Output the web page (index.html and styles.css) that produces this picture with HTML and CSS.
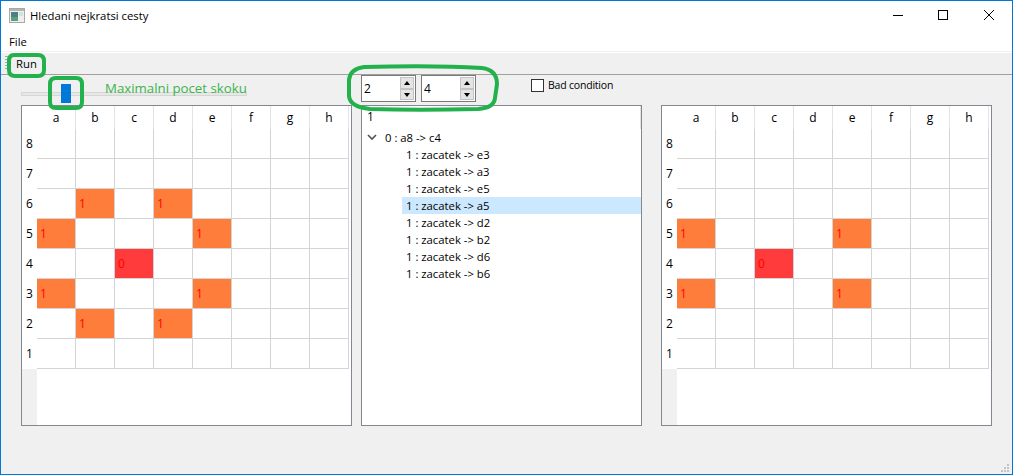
FILE: index.html
```html
<!DOCTYPE html>
<html lang="cs">
<head>
<meta charset="utf-8">
<title>Hledani nejkratsi cesty</title>
<link rel="stylesheet" href="styles.css">
</head>
<body>
<div class="window">
  <header class="titlebar">
    <svg class="app-icon" width="16" height="16" viewBox="0 0 16 16"><rect x="0.5" y="0.5" width="15" height="14" fill="#eef0ee" stroke="#a8a8a8"/><rect x="1" y="1" width="14" height="2" fill="#b4b4b4"/><rect x="2" y="4" width="7" height="9" fill="#4d7f86"/><rect x="2" y="9" width="7" height="4" fill="#5a9f80"/><rect x="10" y="4" width="4" height="4" fill="#cfe3d8"/></svg>
    <span class="title">Hledani nejkratsi cesty</span>
    <div class="caption-buttons">
      <svg width="46" height="30" viewBox="0 0 46 30"><path d="M19 14.5h10" stroke="#000" fill="none"/></svg>
      <svg width="46" height="30" viewBox="0 0 46 30"><rect x="18.5" y="9.5" width="9" height="9" stroke="#000" fill="none"/></svg>
      <svg width="46" height="30" viewBox="0 0 46 30"><path d="M18 9l10 10M28 9l-10 10" stroke="#000" fill="none"/></svg>
    </div>
  </header>
  <nav class="menubar"><span>File</span></nav>
  <div class="toolbar">
    <span class="grip"></span>
    <span class="tool">Run</span>
  </div>
  <div class="controls">
    <div class="slider"><span class="groove"></span><span class="handle"></span></div>
    <span class="slider-label">Maximalni pocet skoku</span>
    <div class="spin"><span class="spin-value">2</span><span class="spin-btns"><i class="up"></i><i class="down"></i></span></div>
    <div class="spin"><span class="spin-value">4</span><span class="spin-btns"><i class="up"></i><i class="down"></i></span></div>
    <label class="check"><span class="box"></span>Bad condition</label>
  </div>
  <main class="panels">
    <section class="board" id="left"></section>
    <section class="tree">
      <div class="tree-head">1</div>
      <div class="row top"><svg width="10" height="7" viewBox="0 0 10 7"><path d="M1 1l4 4 4-4" stroke="#555" stroke-width="1.7" fill="none"/></svg>0 : a8 -&gt; c4</div>
      <div class="row">1 : zacatek -&gt; e3</div>
      <div class="row">1 : zacatek -&gt; a3</div>
      <div class="row">1 : zacatek -&gt; e5</div>
      <div class="row selected">1 : zacatek -&gt; a5</div>
      <div class="row">1 : zacatek -&gt; d2</div>
      <div class="row">1 : zacatek -&gt; b2</div>
      <div class="row">1 : zacatek -&gt; d6</div>
      <div class="row">1 : zacatek -&gt; b6</div>
    </section>
    <section class="board" id="right"></section>
  </main>
  <svg class="resize" width="8" height="8" viewBox="0 0 8 8"><path d="M6 0h2v2H6zM3 3h2v2H3zM6 3h2v2H6zM0 6h2v2H0zM3 6h2v2H3zM6 6h2v2H6z" fill="#c4c4c4"/></svg>
  <svg class="marks" width="1013" height="475" viewBox="0 0 1013 475" aria-hidden="true">
    <g fill="none" stroke="#22b14c" stroke-width="4">
      <path d="M14 55H38Q44 55 44 61V70Q44 76 38 76H15Q9 76 9 70V61Q9 55 14 55Z"/>
      <path d="M56 78H76Q82 78 82 84V102Q82 108 76 108H56Q50 108 50 102V84Q50 78 56 78Z"/>
      <path d="M364 67C400 66 450 66 482 68Q497 70 497 84L495 98Q494 108 478 109C440 110 400 110 370 109Q350 107 349 96V80Q350 69 364 67Z"/>
    </g>
  </svg>
</div>
<script src="board.js"></script>
</body>
</html>
```
FILE: board.js
```js
var cols = ["a","b","c","d","e","f","g","h"];
var boards = {
  left: {a5:1,a3:1,b6:1,b2:1,d6:1,d2:1,e5:1,e3:1,c4:0},
  right: {a5:1,a3:1,e5:1,e3:1,c4:0}
};
Object.keys(boards).forEach(function (id) {
  var el = document.getElementById(id), data = boards[id], html = '<div class="corner"></div>';
  cols.forEach(function (c) { html += '<div class="col-head">' + c + '</div>'; });
  for (var r = 8; r >= 1; r--) {
    html += '<div class="row-head">' + r + '</div>';
    cols.forEach(function (c) {
      var k = c + r, v = data[k];
      var cls = v === 1 ? " hop" : v === 0 ? " start" : "";
      html += '<div class="cell' + cls + '">' + (v === undefined ? "" : v) + '</div>';
    });
  }
  html += '<div class="filler"></div>';
  el.innerHTML = html;
});
```
FILE: styles.css
```css
* { box-sizing: border-box; }
html, body { margin: 0; padding: 0; }
body { width: 1013px; height: 475px; overflow: hidden; font: 11.3px "Open Sans", "Noto Sans", sans-serif; color: #000; }
.window { position: relative; width: 1013px; height: 475px; border: 1px solid #0078d7; background: #f0f0f0; display: flex; flex-direction: column; }
.titlebar { height: 30px; background: #fff; display: flex; align-items: center; padding-left: 8px; flex: none; }
.app-icon { margin-right: 5px; }
.title { flex: 1; margin-bottom: 2px; }
.caption-buttons { display: flex; }
.caption-buttons svg { display: block; }
.menubar { height: 21px; background: #fff; padding: 0 0 0 8px; line-height: 21px; flex: none; border-bottom: 1px solid #f0f0f0; }
.toolbar { height: 23px; flex: none; display: flex; align-items: center; border-top: 1px solid #fff; border-bottom: 1px solid #a0a0a0; }
.grip { width: 3px; height: 15px; margin: 0 3px 0 4px; background: repeating-linear-gradient(#a8a8a8 0 1px, transparent 1px 3px); }
.tool { padding: 0 5px; line-height: 18px; }
.controls { height: 30px; position: relative; flex: none; display: flex; padding-left: 360px; gap: 5px; }
.slider { position: absolute; left: 20px; top: 8px; width: 226px; height: 20px; }
.groove { position: absolute; left: 0; top: 9px; width: 100%; height: 4px; background: #e7e7e7; border: 1px solid #d6d6d6; }
.handle { position: absolute; left: 40px; top: 1px; width: 10px; height: 19px; background: #0078d7; }
.slider-label { position: absolute; left: 104px; top: 4px; color: #39b54a; font-size: 13.25px; }
.spin { width: 55px; height: 27px; background: #fff; border: 1px solid #7a7a7a; display: flex; justify-content: space-between; align-items: center; padding-left: 2px; font-size: 12px; }
.spin-btns { width: 14px; height: 23px; display: flex; flex-direction: column; margin-right: 1px; }
.spin-btns i { flex: 1; display: block; background: #e4e4e4; border: 1px solid #c4c4c4; position: relative; }
.spin-btns i::after { content: ""; position: absolute; left: 3px; width: 0; height: 0; border-left: 3px solid transparent; border-right: 3px solid transparent; }
.spin-btns .up::after { top: 3px; border-bottom: 4px solid #000; }
.spin-btns .down::after { top: 3px; border-top: 4px solid #000; }
.check { display: flex; align-items: center; gap: 4px; margin-left: 50px; height: 20px; font-size: 10.5px; letter-spacing: -0.2px; }
.box { width: 13px; height: 13px; background: #fff; border: 1px solid #333; }
.panels { flex: none; display: flex; padding-left: 20px; }
.board { width: 331px; height: 321px; background: #fff; border: 1px solid #828790; font-size: 12px; display: grid; grid-template-columns: 15px repeat(8, 39px); grid-template-rows: 23px repeat(8, 30px) 1fr; }
#left { margin-right: 9px; }
#right { margin-left: 19px; }
.corner, .col-head { text-align: center; line-height: 23px; }
.col-head { border-right: 1px solid #e3e3e3; }
.row-head { text-align: center; line-height: 30px; }
.cell { border-right: 1px solid #d4d4d4; border-bottom: 1px solid #d4d4d4; color: #f00; line-height: 29px; padding-left: 3px; }
.hop { background: #ff7d3b; }
.start { background: #ff3b3b; }
.filler { background: #f0f0f0; width: 15px; grid-column: 1; }
.tree { width: 281px; height: 321px; background: #fff; border: 1px solid #828790; }
.tree-head { height: 23px; line-height: 21px; padding-left: 5px; border-right: 1px solid #e3e3e3; font-size: 12px; }
.row { height: 17px; line-height: 17px; padding-left: 44px; }
.row.top { padding-left: 5px; display: flex; align-items: center; gap: 8px; }
.row.selected { background: #cce8ff; margin-left: 40px; padding-left: 4px; }
.resize { position: absolute; right: 3px; bottom: 2px; }
.marks { position: absolute; left: -1px; top: -1px; pointer-events: none; }
```
